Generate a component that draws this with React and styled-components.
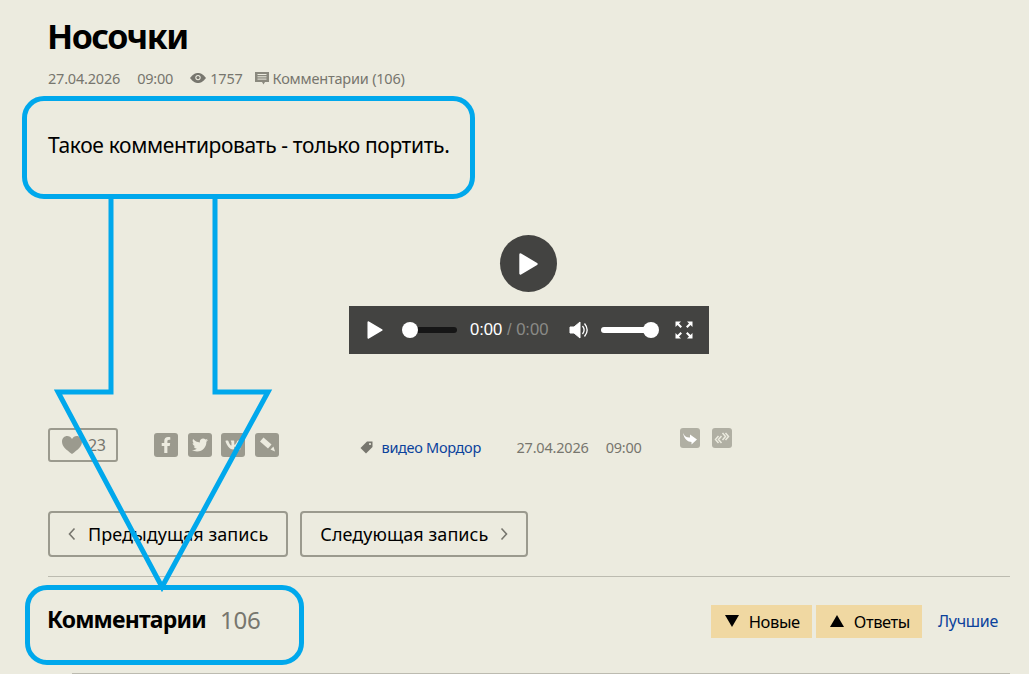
import React from 'react'
import styled, { createGlobalStyle } from 'styled-components'
import { FaFacebookF, FaTwitter, FaVk } from 'react-icons/fa'

const Global = createGlobalStyle`
  html, body {
    margin: 0;
    padding: 0;
    background: #ecebdf;
    font-family: 'Noto Sans', 'Open Sans', sans-serif;
    color: #000;
  }
`

const Page = styled.div`
  position: relative;
  width: 1029px;
  height: 674px;
  overflow: hidden;
  padding: 0 19px 0 48px;
  box-sizing: border-box;
`

const Title = styled.h1`
  margin: 0 0 0 -1px;
  padding-top: 14px;
  height: 44px;
  font-size: 34px;
  line-height: 44px;
  font-weight: 700;
  letter-spacing: -1.5px;
`

const Meta = styled.div`
  display: flex;
  align-items: center;
  height: 20px;
  margin-top: 10px;
  font-size: 14.5px;
  letter-spacing: -0.2px;
  color: #77766e;
`

const MetaItem = styled.span`
  display: inline-flex;
  align-items: center;
  gap: 4px;
  margin-right: ${p => p.$gap || 12}px;
`

const Lead = styled.p`
  margin: 42px 0 0;
  height: 30px;
  font-size: 21px;
  line-height: 30px;
  letter-spacing: -0.35px;
`

const PlayerWrap = styled.div`
  display: flex;
  flex-direction: column;
  align-items: center;
  margin-top: 75px;
`

const BigPlay = styled.div`
  display: flex;
  align-items: center;
  justify-content: center;
  width: 57px;
  height: 57px;
  margin-right: 1px;
  border-radius: 50%;
  background: #434341;
`

const Player = styled.div`
  display: flex;
  align-items: center;
  width: 360px;
  height: 48px;
  margin-top: 14px;
  padding: 0 16px 0 18px;
  box-sizing: border-box;
  background: #434341;
  color: #fff;
`

const Track = styled.div`
  position: relative;
  width: ${p => p.$w}px;
  height: 6px;
  border-radius: 3px;
  background: ${p => p.$bg};
  margin-left: ${p => p.$ml}px;
`

const Thumb = styled.div`
  position: absolute;
  top: -5px;
  ${p => (p.$end ? 'right: -8px;' : 'left: -8px;')}
  width: 16px;
  height: 16px;
  border-radius: 50%;
  background: #fff;
`

const Time = styled.div`
  margin-left: 13px;
  width: 99px;
  font-family: 'Liberation Sans', sans-serif;
  font-size: 16.6px;
  white-space: nowrap;
`

const TimeRest = styled.span`
  color: #8a8a86;
`

const ActionRow = styled.div`
  display: flex;
  align-items: flex-start;
  margin-top: 74px;
  height: 34px;
`

const Like = styled.div`
  display: flex;
  align-items: center;
  gap: 6px;
  width: 70px;
  height: 34px;
  box-sizing: border-box;
  padding-left: 12px;
  border: 2px solid #9b9a8e;
  border-radius: 3px;
  font-size: 16px;
  letter-spacing: -0.5px;
  color: #77766e;
`

const Socials = styled.div`
  display: flex;
  gap: 9.5px;
  margin: 5px 0 0 36px;
`

const Social = styled.div`
  display: flex;
  align-items: center;
  justify-content: center;
  width: 24px;
  height: 24px;
  border-radius: 3px;
  background: #9b9a8e;
  color: #ecebdf;
  font-size: 16px;
`

const Tag = styled.div`
  display: flex;
  align-items: center;
  gap: 9px;
  margin: 9px 0 0 81px;
  width: 157px;
  height: 20px;
`

const BlueLink = styled.a`
  color: #0b429c;
  font-size: 14.5px;
  letter-spacing: -0.3px;
  white-space: nowrap;
`

const PostDate = styled.div`
  display: flex;
  gap: 17px;
  margin-top: 9px;
  height: 20px;
  line-height: 20px;
  font-size: 14.5px;
  letter-spacing: -0.2px;
  color: #77766e;
`

const Minis = styled.div`
  display: flex;
  gap: 12px;
  margin-left: 38px;
`

const Mini = styled.div`
  display: flex;
  align-items: center;
  justify-content: center;
  width: 20px;
  height: 20px;
  border-radius: 3px;
  background: #b0afa3;
`

const PagerRow = styled.div`
  display: flex;
  gap: 12px;
  margin-top: 49px;
`

const PagerButton = styled.a`
  display: flex;
  align-items: center;
  gap: 12px;
  height: 46px;
  box-sizing: border-box;
  padding: 0 18px;
  border: 2px solid #9b9a8e;
  border-radius: 4px;
  font-size: 18px;
  letter-spacing: 0.06px;
  white-space: nowrap;
`

const Rule = styled.div`
  height: 1px;
  background: #bcbbb0;
  margin-left: ${p => p.$ml || 0}px;
  margin-top: ${p => p.$mt || 0}px;
`

const CommentsHead = styled.div`
  display: flex;
  align-items: center;
  height: 96px;
  padding-bottom: 12px;
  box-sizing: border-box;
`

const Heading = styled.h2`
  margin: 0 0 0 -1px;
  font-size: 23px;
  font-weight: 700;
  letter-spacing: -0.8px;
`

const Count = styled.span`
  margin-left: 14px;
  font-size: 24px;
  letter-spacing: -0.2px;
  color: #77766e;
`

const Filters = styled.div`
  display: flex;
  align-items: center;
  margin: 4px 0 0 auto;
  gap: 4px;
  padding-right: 12px;
`

const Filter = styled.div`
  display: flex;
  align-items: center;
  gap: 10px;
  height: 33px;
  padding: 0 12px 0 14px;
  background: #f0d8a2;
  font-size: 16.5px;
  letter-spacing: -0.4px;
`

const Triangle = styled.span`
  width: 0;
  height: 0;
  border-left: 7px solid transparent;
  border-right: 7px solid transparent;
  ${p => (p.$up ? 'border-bottom: 12px solid #000;' : 'border-top: 12px solid #000;')}
`

const BestLink = styled(BlueLink)`
  margin-left: 12px;
  font-size: 16px;
`

const Callout = styled.div`
  position: absolute;
  left: ${p => p.$x}px;
  top: ${p => p.$y}px;
  width: ${p => p.$w}px;
  height: ${p => p.$h}px;
  box-sizing: border-box;
  border: 5px solid #00a8ec;
  border-radius: 22px;
`

const ArrowOverlay = styled.svg`
  position: absolute;
  left: 0;
  top: 0;
  pointer-events: none;
`

const PlayIcon = ({ w, h }) => (
  <svg width={w} height={h} viewBox="0 0 19 22">
    <path d="M1.5 1.5 L17.5 11 L1.5 20.5 Z" fill="#fff" stroke="#fff" strokeWidth="2.4" strokeLinejoin="round" />
  </svg>
)

const App = () => (
  <Page>
    <Global />
    <Title>Носочки</Title>
    <Meta>
      <MetaItem $gap={17}>27.04.2026</MetaItem>
      <MetaItem $gap={17}>09:00</MetaItem>
      <MetaItem $gap={12}>
        <svg width="16" height="10" viewBox="0 0 16 10">
          <path d="M0 5 C3 1 5.5 0 8 0 C10.5 0 13 1 16 5 C13 9 10.5 10 8 10 C5.5 10 3 9 0 5 Z" fill="#77766e" />
          <circle cx="8" cy="4.6" r="2.7" fill="#ecebdf" />
          <circle cx="8" cy="4.6" r="1.6" fill="#77766e" />
        </svg>
        1757
      </MetaItem>
      <MetaItem>
        <svg width="14" height="14" viewBox="0 0 14 14">
          <path d="M0 1 H14 V11 H10 L8.5 13.5 L7 11 H0 Z" fill="#8a897e" />
          <path d="M2.5 3.5 H11.5 M2.5 5.8 H11.5 M2.5 8.1 H11.5" stroke="#ecebdf" strokeWidth="1" />
        </svg>
        Комментарии (106)
      </MetaItem>
    </Meta>
    <Lead>Такое комментировать - только портить.</Lead>

    <PlayerWrap>
      <BigPlay>
        <PlayIcon w={19} h={22} />
      </BigPlay>
      <Player>
        <PlayIcon w={16} h={18} />
        <Track $w={47} $ml={27} $bg="#161616">
          <Thumb />
        </Track>
        <Time>
          0:00 <TimeRest>/ 0:00</TimeRest>
        </Time>
        <svg width="20" height="20" viewBox="0 0 20 20">
          <path d="M1 7 H5 L11 2 V18 L5 13 H1 Z" fill="#fff" stroke="#fff" strokeLinejoin="round" />
          <path d="M13.5 6 C15.5 8.5 15.5 11.5 13.5 14 M15.5 3.5 C18.8 7.5 18.8 12.5 15.5 16.5" stroke="#fff" strokeWidth="1.3" fill="none" />
        </svg>
        <Track $w={50} $ml={12} $bg="#fff">
          <Thumb $end />
        </Track>
        <svg width="18" height="18" viewBox="0 0 18 18" style={{ marginLeft: 24 }}>
          <path d="M0.5 0.5 H6 L4 2.5 L7 5.5 L5.5 7 L2.5 4 L0.5 6 Z M17.5 0.5 V6 L15.5 4 L12.5 7 L11 5.5 L14 2.5 L12 0.5 Z M0.5 17.5 V12 L2.5 14 L5.5 11 L7 12.5 L4 15.5 L6 17.5 Z M17.5 17.5 H12 L14 15.5 L11 12.5 L12.5 11 L15.5 14 L17.5 12 Z" fill="#fff" />
        </svg>
      </Player>
    </PlayerWrap>

    <ActionRow>
      <Like>
        <svg width="20" height="18" viewBox="0 0 20 18">
          <path d="M10 18 C4 13.5 0 10.5 0 5.5 C0 2.2 2.5 0 5.2 0 C7.2 0 9 1 10 3 C11 1 12.8 0 14.8 0 C17.5 0 20 2.2 20 5.5 C20 10.5 16 13.5 10 18 Z" fill="#9b9a8e" />
        </svg>
        <span>23</span>
      </Like>
      <Socials>
        <Social><FaFacebookF /></Social>
        <Social><FaTwitter /></Social>
        <Social><FaVk /></Social>
        <Social>
          <svg width="24" height="24" viewBox="0 0 24 24">
            <path d="M8.5 4.5 L16.5 11.5 L13 15.5 L5 8.5 Z" fill="#ecebdf" />
            <path d="M15.5 16.5 L18.5 13.5 L20 18.5 Z" fill="#ecebdf" />
          </svg>
        </Social>
      </Socials>
      <Tag>
        <svg width="13" height="13" viewBox="0 0 13 13">
          <path d="M7 0.5 H12.5 V6 L6 12.5 L0.5 7 Z" fill="#77766e" />
          <circle cx="10" cy="3" r="1.1" fill="#ecebdf" />
        </svg>
        <BlueLink>видео Мордор</BlueLink>
      </Tag>
      <PostDate>
        <span>27.04.2026</span>
        <span>09:00</span>
      </PostDate>
      <Minis>
        <Mini>
          <svg width="20" height="20" viewBox="0 0 20 20">
            <path d="M3 5 C5 9 7 9.5 10 9.5 V6.5 L17 11.5 L11.5 16.5 V14 C8 14 4 11 3 5 Z" fill="#fff" />
          </svg>
        </Mini>
        <Mini>
          <svg width="20" height="20" viewBox="0 0 20 20">
            <path d="M6.5 8 L3.5 11.5 L6.5 15 M9.5 8 L6.5 11.5 L9.5 15 M10.5 5 L13.5 8.5 L10.5 12 M13.5 5 L16.5 8.5 L13.5 12" stroke="#ecebdf" strokeWidth="1.5" fill="none" />
          </svg>
        </Mini>
      </Minis>
    </ActionRow>

    <PagerRow>
      <PagerButton>
        <svg width="8" height="14" viewBox="0 0 8 14">
          <path d="M6.5 1.5 L1.5 7 L6.5 12.5" stroke="#77766e" strokeWidth="1.6" fill="none" />
        </svg>
        Предыдущая запись
      </PagerButton>
      <PagerButton>
        Следующая запись
        <svg width="8" height="14" viewBox="0 0 8 14">
          <path d="M1.5 1.5 L6.5 7 L1.5 12.5" stroke="#77766e" strokeWidth="1.6" fill="none" />
        </svg>
      </PagerButton>
    </PagerRow>

    <Rule $mt={19} />
    <CommentsHead>
      <Heading>Комментарии</Heading>
      <Count>106</Count>
      <Filters>
        <Filter><Triangle />Новые</Filter>
        <Filter><Triangle $up />Ответы</Filter>
        <BestLink>Лучшие</BestLink>
      </Filters>
    </CommentsHead>
    <Rule $ml={24} />

    <Callout $x={22} $y={96} $w={453} $h={103} />
    <Callout $x={25} $y={585} $w={279} $h={80} />
    <ArrowOverlay width="1029" height="674" viewBox="0 0 1029 674">
      <path
        d="M111 198 V392 H58 L162 587 L268 392 H215 V198"
        fill="none"
        stroke="#00a8ec"
        strokeWidth="5"
      />
    </ArrowOverlay>
  </Page>
)

export default App
